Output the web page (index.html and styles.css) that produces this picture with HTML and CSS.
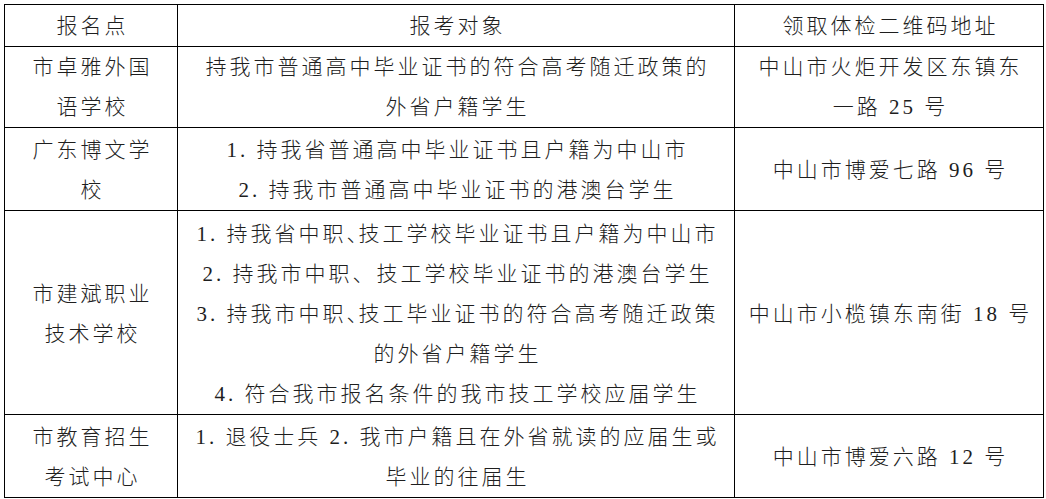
FILE: index.html
```html
<!DOCTYPE html>
<html lang="zh-CN">
<head>
<meta charset="utf-8">
<title>报名点</title>
<link rel="stylesheet" href="styles.css">
</head>
<body>
<table class="grid">
  <colgroup>
    <col class="c1">
    <col class="c2">
    <col class="c3">
  </colgroup>
  <tr class="r-head">
    <td>报名点</td>
    <td>报考对象</td>
    <td>领取体检二维码地址</td>
  </tr>
  <tr class="r1">
    <td>市卓雅外国<br>语学校</td>
    <td>持我市普通高中毕业证书的符合高考随迁政策的<br>外省户籍学生</td>
    <td>中山市火炬开发区东镇东<br>一路 25 号</td>
  </tr>
  <tr class="r2">
    <td>广东博文学<br>校</td>
    <td>1. 持我省普通高中毕业证书且户籍为中山市<br>2. 持我市普通高中毕业证书的港澳台学生</td>
    <td>中山市博爱七路 96 号</td>
  </tr>
  <tr class="r3">
    <td>市建斌职业<br>技术学校</td>
    <td>1. 持我省中职<span class="half">、</span>技工学校毕业证书且户籍为中山市<br>2. 持我市中职、技工学校毕业证书的港澳台学生<br>3. 持我市中职<span class="half">、</span>技工毕业证书的符合高考随迁政策<br>的外省户籍学生<br>4. 符合我市报名条件的我市技工学校应届学生</td>
    <td>中山市小榄镇东南街 18 号</td>
  </tr>
  <tr class="r4">
    <td>市教育招生<br>考试中心</td>
    <td>1. 退役士兵 2. 我市户籍且在外省就读的应届生或<br>毕业的往届生</td>
    <td>中山市博爱六路 12 号</td>
  </tr>
</table>
</body>
</html>
```
FILE: styles.css
```css
html, body {
  margin: 0;
  padding: 0;
  background: #ffffff;
}
body {
  padding: 4px 0 0 4px;
}
.grid {
  border-collapse: collapse;
  table-layout: fixed;
  width: 1039px;
  font-family: "Liberation Serif", "Noto Sans CJK SC", serif;
  font-size: 21px;
  font-weight: 300;
  letter-spacing: 3px;
  color: #1e1e1e;
}
.c1 { width: 173px; }
.c2 { width: 557px; }
.c3 { width: 309px; }
.grid td {
  border: 1px solid #000;
  text-align: center;
  vertical-align: middle;
  line-height: 40px;
  padding: 0 0 0 3px;
  white-space: nowrap;
}
.r-head td { height: 40px; padding-top: 1px; }
.r1 td { height: 79px; }
.r2 td { height: 80px; padding-top: 2px; }
.r3 td { height: 200px; padding-top: 3px; }
.r4 td { height: 79px; padding-top: 2px; }
.half {
  letter-spacing: -9px;
}
```
